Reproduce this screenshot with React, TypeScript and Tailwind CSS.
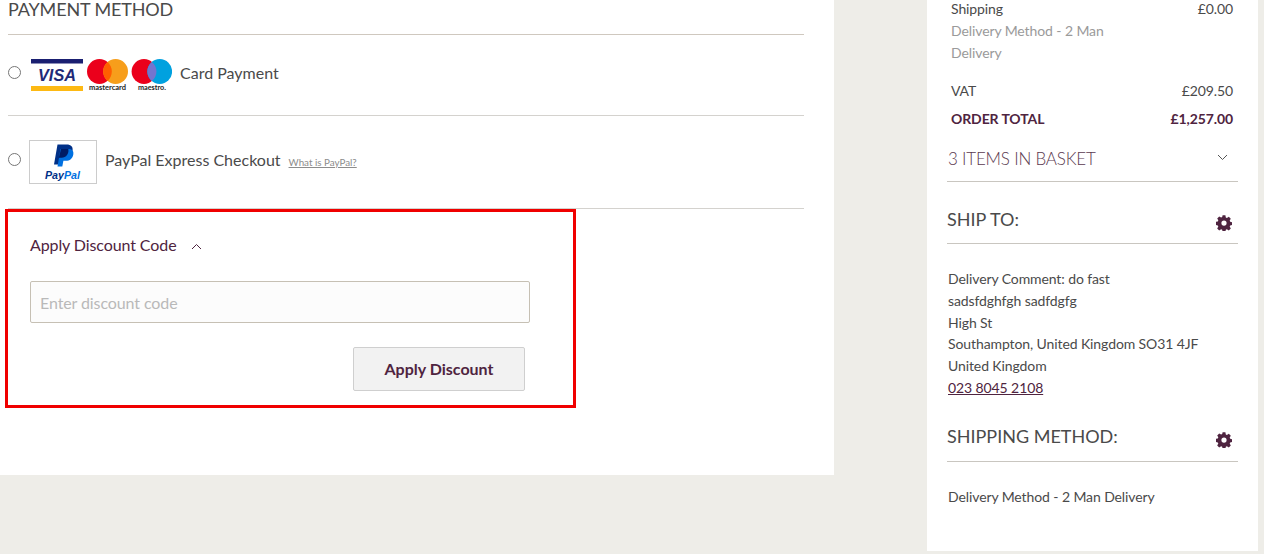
import React from "react";

function Radio({ className = "" }: { className?: string }) {
  return <span className={`block w-[13px] h-[13px] rounded-full border border-[#767676] bg-white shrink-0 ${className}`} />;
}

function Gear() {
  return (
    <svg width="16" height="16" viewBox="0 0 16 16" className="block">
      <path
        fill="#4f2440"
        fillRule="evenodd"
        d="M6.6 0.3h2.8l0.4 2.1 1.1 0.5 1.9-1.1 2 2-1.1 1.8 0.5 1.2 2.1 0.4v2.8l-2.1 0.4-0.5 1.2 1.1 1.8-2 2-1.9-1.1-1.1 0.5-0.4 2.1H6.6l-0.4-2.1-1.1-0.5-1.9 1.1-2-2 1.1-1.8-0.5-1.2-2.1-0.4V6.8l2.1-0.4 0.5-1.2-1.1-1.8 2-2 1.9 1.1 1.1-0.5zM8 5.5a2.6 2.6 0 1 0 0 5.2a2.6 2.6 0 1 0 0-5.2z"
      />
    </svg>
  );
}

function Chevron({ up = false, color = "#4f2440" }: { up?: boolean; color?: string }) {
  return (
    <svg width="11" height="7" viewBox="0 0 11 7" className="block">
      <path d={up ? "M1 6 L5.5 1.5 L10 6" : "M1 1 L5.5 5.5 L10 1"} fill="none" stroke={color} strokeWidth="1" />
    </svg>
  );
}

function Cards() {
  return (
    <svg width="141" height="33" viewBox="0 0 141 33" className="block shrink-0">
      <rect x="0" y="0" width="52" height="4.5" fill="#1a1f71" />
      <rect x="0" y="27" width="52" height="5" fill="#fdb913" />
      <text x="26" y="21.5" textAnchor="middle" fontFamily="Liberation Sans, sans-serif" fontStyle="italic" fontWeight="700" fontSize="17" textLength="38" lengthAdjust="spacingAndGlyphs" fill="#1f2a78">VISA</text>
      <circle cx="68.4" cy="12.5" r="12.4" fill="#eb001b" />
      <circle cx="84.6" cy="12.5" r="12.4" fill="#f79e1b" />
      <path d="M76.5 3.1a12.4 12.4 0 0 1 0 18.8a12.4 12.4 0 0 1 0-18.8z" fill="#ff5f00" />
      <text x="76.5" y="31" textAnchor="middle" fontFamily="Lato, sans-serif" fontWeight="700" fontSize="7" textLength="37" lengthAdjust="spacingAndGlyphs" fill="#222">mastercard</text>
      <circle cx="113" cy="12.5" r="12.4" fill="#eb001b" />
      <circle cx="128.7" cy="12.5" r="12.4" fill="#00a1df" />
      <path d="M120.9 2.9a12.4 12.4 0 0 1 0 19.2a12.4 12.4 0 0 1 0-19.2z" fill="#7375cf" />
      <text x="121" y="31" textAnchor="middle" fontFamily="Lato, sans-serif" fontWeight="700" fontSize="6.6" textLength="28" lengthAdjust="spacingAndGlyphs" fill="#222">maestro.</text>
    </svg>
  );
}

function PayPalLogo() {
  return (
    <div className="w-[68px] h-[44px] border border-[#cccccc] bg-white shrink-0">
      <svg width="66" height="42" viewBox="1 1 66 42" className="block">
        <path d="M28.5 4.5h9c4.6 0 6.8 2.3 6 6.3-.9 4.6-3.8 7-8.3 7h-3.2l-1.3 6.7h-5.7z" fill="#003087" />
        <path d="M31.5 9h7.8c3.8 0 5.6 2 5 5.4-.8 4.1-3.5 6.3-7.5 6.3h-2.4l-1.1 5.8h-4.8z" fill="#0070e0" />
        <path d="M32 9h7.3c.9 4.4-2.2 8.8-6.6 8.8h-2.9z" fill="#001c64" />
        <text x="33.5" y="38.5" textAnchor="middle" fontFamily="Liberation Sans, sans-serif" fontStyle="italic" fontWeight="700" fontSize="11" textLength="35" lengthAdjust="spacingAndGlyphs">
          <tspan fill="#003087">Pay</tspan>
          <tspan fill="#0070e0">Pal</tspan>
        </text>
      </svg>
    </div>
  );
}

function Row({ label, value, className = "" }: { label: string; value: string; className?: string }) {
  return (
    <div className={`flex justify-between pl-[4px] pr-[5px] tracking-[-0.1px] ${className}`}>
      <span>{label}</span>
      <span>{value}</span>
    </div>
  );
}

function SideHeading({ title, className = "" }: { title: string; className?: string }) {
  return (
    <div className={`flex justify-between border-b border-[#c9c6c0] pr-[6px] ${className}`}>
      <span className="text-[18px] leading-[26px] uppercase text-[#4a4a4a]">{title}</span>
      <span className="mt-[9px]"><Gear /></span>
    </div>
  );
}

export default function App() {
  return (
    <div className="w-[1264px] h-[554px] overflow-hidden bg-[#eeede8] flex items-start font-['Lato','Noto_Sans',sans-serif] text-[#4a4a4a]">
      <main className="w-[834px] h-[475px] bg-white pl-[8px] shrink-0">
        <div className="w-[796px]">
          <h2 className="h-[35px] border-b border-[#cfc8bf] text-[18px] leading-[18px] tracking-[-0.15px] uppercase text-[#4a4a4a]">Payment Method</h2>
          <div className="h-[81px] border-b border-[#d4d2ce] flex items-center">
            <Radio className="mt-[-6px]" />
            <span className="ml-[10px]"><Cards /></span>
            <span className="ml-[8px] text-[16px] mt-[-4px]">Card Payment</span>
          </div>
          <div className="h-[93px] border-b border-[#d4d2ce] flex items-center">
            <Radio className="mt-[-5px]" />
            <span className="ml-[8px] mt-[-1px]"><PayPalLogo /></span>
            <span className="ml-[8px] text-[16px] mt-[-4px]">PayPal Express Checkout</span>
            <a className="ml-[8px] text-[9.8px] underline text-[#8c8c8c]">What is PayPal?</a>
          </div>
        </div>
        <section className="ml-[-3px] w-[571px] h-[199px] border-[3px] border-[#f00000] pl-[22px] pr-[43px] pt-[22px]">
          <div className="flex items-center text-[16px] leading-[22px] tracking-[-0.1px] text-[#4f2440]">
            <span>Apply Discount Code</span>
            <span className="ml-[15px] mt-[2px]"><Chevron up /></span>
          </div>
          <input
            readOnly
            placeholder="Enter discount code"
            className="block mt-[25px] w-[500px] h-[42px] border border-[#c6c0b4] rounded-[2px] bg-[#fcfcfc] px-[9px] text-[16px] tracking-[-0.1px] outline-none placeholder:text-[#b9b9b9]"
          />
          <div className="flex justify-end mt-[24px] pr-[5px]">
            <button className="w-[172px] h-[44px] border border-[#cfcfcf] rounded-[2px] bg-[#f2f2f2] text-[16px] font-bold text-[#4f2440]">Apply Discount</button>
          </div>
        </section>
      </main>
      <aside className="ml-[93px] w-[331px] h-[551px] bg-white pl-[20px] pr-[20px] text-[14px] shrink-0">
        <Row label="Shipping" value="£0.00" className="leading-[20px] mt-[-1px]" />
        <div className="pl-[4px] w-[170px] leading-[22px] tracking-[-0.1px] text-[#9a9a9a] mt-[1px]">Delivery Method - 2 Man Delivery</div>
        <Row label="VAT" value="£209.50" className="leading-[20px] mt-[17px]" />
        <Row label="ORDER TOTAL" value="£1,257.00" className="leading-[20px] mt-[8px] font-bold text-[#4f2440]" />
        <div className="flex justify-between items-center h-[47px] mt-[6px] border-b border-[#c9c6c0] pl-[1px] pr-[10px]">
          <span className="text-[17px] font-light tracking-[-0.2px] uppercase text-[#5b3a50] mt-[2px]">3 Items in Basket</span>
          <span className="mt-[-2px]"><Chevron color="#555555" /></span>
        </div>
        <SideHeading title="Ship To:" className="h-[62px] pt-[24px]" />
        <div className="mt-[24px] pl-[1px] leading-[21.8px] text-[14px] tracking-[-0.1px]">
          <div>Delivery Comment: do fast</div>
          <div>sadsfdghfgh sadfdgfg</div>
          <div>High St</div>
          <div>Southampton, United Kingdom SO31 4JF</div>
          <div>United Kingdom</div>
          <a className="underline text-[#4f2440]">023 8045 2108</a>
        </div>
        <SideHeading title="Shipping Method:" className="h-[50px] pt-[11px] mt-[13px]" />
        <div className="mt-[24px] pl-[1px] leading-[22px] tracking-[-0.1px]">Delivery Method - 2 Man Delivery</div>
      </aside>
    </div>
  );
}
